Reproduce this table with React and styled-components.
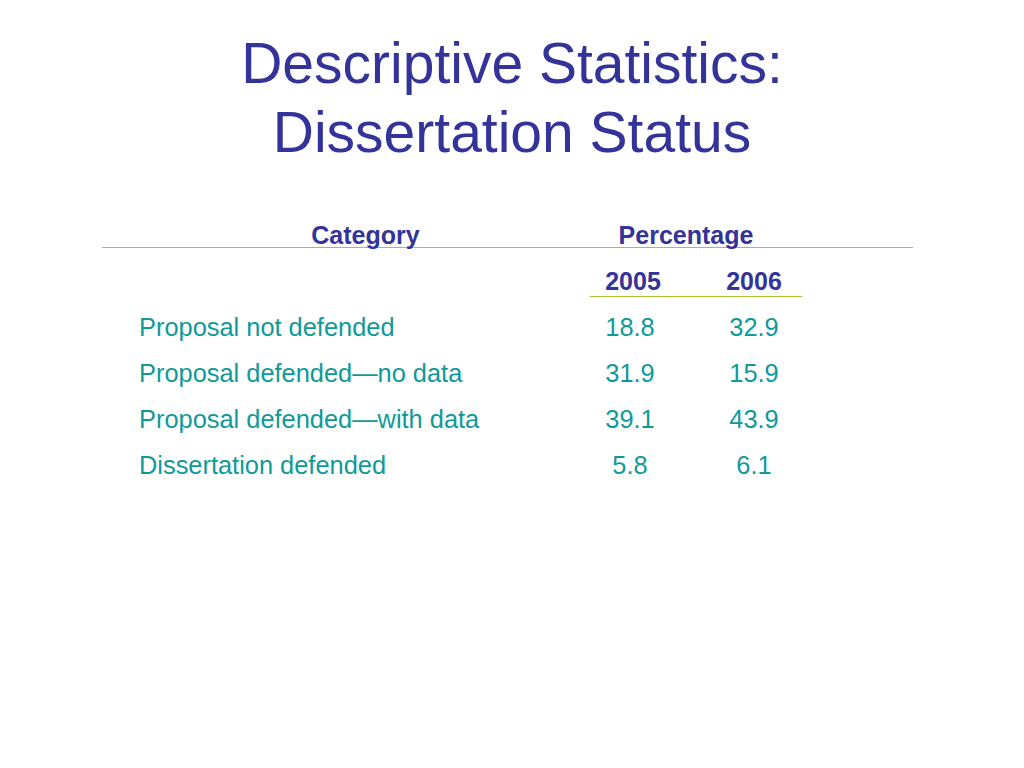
import React from "react";
import styled, { createGlobalStyle } from "styled-components";

const GlobalStyle = createGlobalStyle`
  body {
    margin: 0;
    background: #ffffff;
    font-family: "Liberation Sans", Arial, sans-serif;
  }
`;

const Slide = styled.div`
  width: 1024px;
  height: 768px;
  background: #ffffff;
  overflow: hidden;
`;

const Title = styled.h1`
  margin: 0;
  padding-top: 29px;
  font-size: 57px;
  font-weight: normal;
  line-height: 69px;
  color: #333399;
  text-align: center;
`;

const Table = styled.div`
  margin: 56px 0 0 102px;
  width: 811px;
`;

const Row = styled.div`
  display: grid;
  grid-template-columns: 467px 122px 126px;
  align-items: center;
  height: ${(p) => p.$height}px;
  line-height: ${(p) => p.$height}px;
  font-size: ${(p) => (p.$bold ? 25 : 25.4)}px;
  font-weight: ${(p) => (p.$bold ? "bold" : "normal")};
  color: ${(p) => (p.$bold ? "#333399" : "#0f9a99")};
`;

const HeadCell = styled.div`
  padding-left: ${(p) => p.$left || 0}px;
  padding-right: ${(p) => p.$right || 0}px;
  text-align: center;
  grid-column: ${(p) => p.$span || "auto"};
  white-space: nowrap;
`;

const LabelCell = styled.div`
  padding-left: 37px;
  white-space: nowrap;
`;

const NumCell = styled.div`
  text-align: center;
  white-space: nowrap;
`;

const Rule = styled.div`
  height: 1px;
  background: #a8c62c;
  margin-left: ${(p) => p.$left || 0}px;
  width: ${(p) => p.$width}px;
  margin-bottom: ${(p) => p.$below || 0}px;
`;

const Spacer = styled.div`
  height: ${(p) => p.$h}px;
`;

const rows = [
  { label: "Proposal not defended", a: "18.8", b: "32.9" },
  { label: "Proposal defended\u2014no data", a: "31.9", b: "15.9" },
  { label: "Proposal defended\u2014with data", a: "39.1", b: "43.9" },
  { label: "Dissertation defended", a: "5.8", b: "6.1" },
];

export default function App() {
  return (
    <Slide>
      <GlobalStyle />
      <Title>
        Descriptive Statistics:
        <br />
        Dissertation Status
      </Title>
      <Table>
        <Row $height={24} $bold>
          <HeadCell $left={60}>Category</HeadCell>
          <HeadCell $span="2 / 4" $right={14}>
            Percentage
          </HeadCell>
        </Row>
        <Rule $width={811} />
        <Spacer $h={18} />
        <Row $height={30} $bold>
          <div />
          <HeadCell $left={6}>2005</HeadCell>
          <HeadCell>2006</HeadCell>
        </Row>
        <Rule $left={488} $width={212} $below={7} />
        {rows.map((r, i) => (
          <Row key={i} $height={46}>
            <LabelCell>{r.label}</LabelCell>
            <NumCell>{r.a}</NumCell>
            <NumCell>{r.b}</NumCell>
          </Row>
        ))}
      </Table>
    </Slide>
  );
}
